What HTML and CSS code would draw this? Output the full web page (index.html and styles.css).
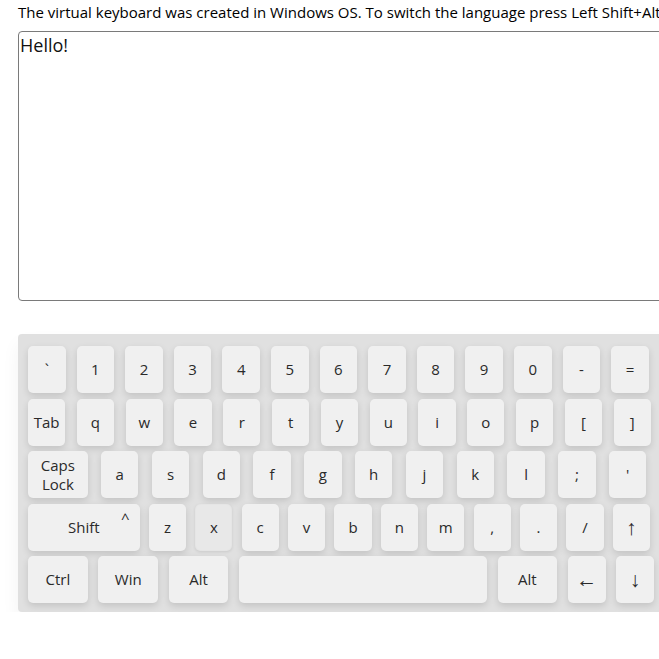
FILE: index.html
```html
<!DOCTYPE html>
<html lang="en">
<head>
<meta charset="utf-8">
<title>Virtual keyboard</title>
<link rel="stylesheet" href="styles.css">
</head>
<body>
<div class="page">
  <p class="note">The virtual keyboard was created in Windows OS. To switch the language press Left Shift+Alt</p>
  <textarea class="text">Hello!</textarea>
  <div class="keyboard">
    <div class="row r1">
      <div class="key">`</div><div class="key">1</div><div class="key">2</div><div class="key">3</div><div class="key">4</div><div class="key">5</div><div class="key">6</div><div class="key">7</div><div class="key">8</div><div class="key">9</div><div class="key">0</div><div class="key">-</div><div class="key">=</div>
    </div>
    <div class="row r2">
      <div class="key">Tab</div><div class="key">q</div><div class="key">w</div><div class="key">e</div><div class="key">r</div><div class="key">t</div><div class="key">y</div><div class="key">u</div><div class="key">i</div><div class="key">o</div><div class="key">p</div><div class="key">[</div><div class="key">]</div>
    </div>
    <div class="row r3">
      <div class="key mid caps">Caps<br>Lock</div><div class="key">a</div><div class="key">s</div><div class="key">d</div><div class="key">f</div><div class="key">g</div><div class="key">h</div><div class="key">j</div><div class="key">k</div><div class="key">l</div><div class="key">;</div><div class="key">'</div>
    </div>
    <div class="row r4">
      <div class="key shift">Shift<span class="sup">^</span></div><div class="key">z</div><div class="key pressed">x</div><div class="key">c</div><div class="key">v</div><div class="key">b</div><div class="key">n</div><div class="key">m</div><div class="key">,</div><div class="key">.</div><div class="key">/</div><div class="key arrow">↑</div>
    </div>
    <div class="row r5">
      <div class="key mid">Ctrl</div><div class="key mid">Win</div><div class="key mid">Alt</div><div class="key space"></div><div class="key mid">Alt</div><div class="key arrow">←</div><div class="key arrow">↓</div>
    </div>
  </div>
</div>
</body>
</html>
```
FILE: styles.css
```css
html, body {
  margin: 0;
  padding: 0;
  overflow: hidden;
  background: #ffffff;
}

body {
  font-family: "Open Sans", "DejaVu Sans", sans-serif;
  color: #222;
}

.page {
  width: 760px;
  padding: 2px 0 0 18px;
}

.note {
  margin: 0;
  font-size: 15px;
  line-height: 21px;
  color: #000;
  white-space: nowrap;
}

.text {
  display: block;
  box-sizing: border-box;
  margin-top: 8px;
  width: 740px;
  height: 270px;
  padding: 1px 1px;
  border: 1px solid #7a7a7a;
  border-radius: 4px;
  font-family: "Open Sans", sans-serif;
  font-size: 18px;
  color: #111;
  resize: none;
  outline: none;
}

.keyboard {
  margin-top: 33px;
  width: 740px;
  box-sizing: border-box;
  padding: 12px 10px 9px;
  background: #e0e0e0;
  border-radius: 4px;
  box-shadow: 0 10px 18px rgba(0, 0, 0, 0.05);
  display: flex;
  flex-direction: column;
  gap: 5.5px;
}

.row {
  display: flex;
}

.r1 { gap: 11px; }
.r2 { gap: 11.5px; }
.r3 { gap: 13.3px; }
.r4 { gap: 9.1px; }
.r5 { gap: 10.7px; }

.key {
  position: relative;
  flex: none;
  width: 37.5px;
  height: 47px;
  box-sizing: border-box;
  background: #f0f0f0;
  border-radius: 5px;
  box-shadow: 0 3px 7px rgba(0, 0, 0, 0.13);
  display: flex;
  align-items: center;
  justify-content: center;
  text-align: center;
  font-size: 15px;
  line-height: 19px;
  color: #2a2a2a;
}

.r1 .key { width: 37.6px; }
.r2 .key { width: 37.3px; }
.r4 .key { width: 37.3px; }

.key.mid,
.r3 .key.caps { width: 59.7px; }
.key.shift { width: 111.7px; }
.key.space { width: 247.7px; }
.r5 .key.arrow { width: 37.7px; }

.key.pressed {
  background: #e8e8e8;
  box-shadow: 0 1px 3px rgba(0, 0, 0, 0.1), inset 0 0 2px rgba(0, 0, 0, 0.06);
}

.key.arrow {
  font-family: "Liberation Sans", "DejaVu Sans", sans-serif;
  font-size: 21px;
}

.sup {
  position: absolute;
  top: 5px;
  right: 10px;
  font-size: 15px;
}
```
